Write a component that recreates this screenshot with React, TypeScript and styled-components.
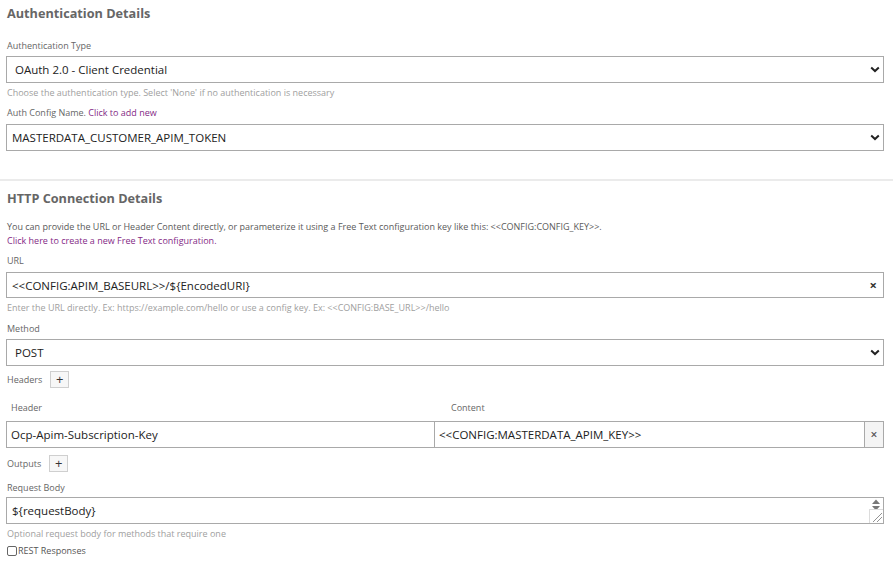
import React from "react";
import styled, { createGlobalStyle } from "styled-components";

const Global = createGlobalStyle`
  html, body { margin: 0; padding: 0; background: #fff; }
  body { font-family: "Open Sans", "Liberation Sans", Arial, sans-serif; color: #333; }
  * { box-sizing: border-box; }
`;

const Page = styled.div`
  padding: 0 9px 0 6px;
  width: 893px;
`;

const Section = styled.section<{ $divider?: boolean; $pt?: number; $pb?: number }>`
  display: flex;
  flex-direction: column;
  padding-top: ${(p) => p.$pt ?? 0}px;
  padding-bottom: ${(p) => p.$pb ?? 0}px;
  ${(p) => (p.$divider ? "border-top: 2px solid #ebebeb; margin: 0 -9px 0 -6px; padding-left: 6px; padding-right: 9px;" : "")}
`;

const Title = styled.h2`
  margin: 0;
  font-size: 12.7px;
  line-height: 26px;
  font-weight: 700;
  color: #666;
  padding-left: 1px;
`;

const Label = styled.div<{ $mt?: number }>`
  font-size: 9px;
  line-height: 14px;
  color: #666;
  margin-top: ${(p) => p.$mt ?? 0}px;
  padding-left: 1px;
  white-space: nowrap;
`;

const Help = styled.div<{ $mt?: number }>`
  font-size: 9px;
  line-height: 14px;
  color: #a0a0a0;
  margin-top: ${(p) => p.$mt ?? 0}px;
  padding-left: 1px;
  white-space: nowrap;
`;

const Info = styled.div<{ $mt?: number }>`
  font-size: 9px;
  line-height: 14px;
  color: #5a5a5a;
  margin-top: ${(p) => p.$mt ?? 0}px;
  padding-left: 1px;
  white-space: nowrap;
`;

const Link = styled.a`
  color: #842a86;
  text-decoration: none;
`;

const Box = styled.div<{ $mt?: number; $pl?: number; $pr?: number; $h?: number }>`
  position: relative;
  display: flex;
  align-items: center;
  height: ${(p) => p.$h ?? 27}px;
  margin-top: ${(p) => p.$mt ?? 0}px;
  border: 1px solid #a9a9a9;
  background: #fff;
  padding-left: ${(p) => p.$pl ?? 8}px;
  padding-right: ${(p) => p.$pr ?? 3}px;
  font-size: 11.5px;
  color: #222;
  white-space: nowrap;
`;

const BoxText = styled.span`
  flex: 1;
`;

const Chevron = () => (
  <svg width="10" height="7" viewBox="0 0 10 7">
    <path d="M1.2 1.6 L5 5.1 L8.8 1.6" fill="none" stroke="#222" strokeWidth="2" />
  </svg>
);

const Clear = styled.span`
  font-size: 13px;
  font-weight: 700;
  color: #333;
  line-height: 1;
`;

const InlineRow = styled.div<{ $mt?: number }>`
  display: flex;
  align-items: center;
  gap: 8px;
  margin-top: ${(p) => p.$mt ?? 0}px;
  height: 17px;
`;

const PlusButton = styled.button`
  width: 19px;
  height: 17px;
  border: 1px solid #cfcfcf;
  background: #f7f7f7;
  padding: 0;
  font-size: 13px;
  line-height: 13px;
  color: #333;
  display: flex;
  align-items: center;
  justify-content: center;
  font-family: inherit;
`;

const HeaderLabels = styled.div<{ $mt?: number }>`
  display: grid;
  grid-template-columns: 429px 1fr;
  margin-top: ${(p) => p.$mt ?? 0}px;
`;

const ColLabel = styled(Label)<{ $pl: number }>`
  padding-left: ${(p) => p.$pl}px;
`;

const HeaderRow = styled.div<{ $mt?: number }>`
  display: grid;
  grid-template-columns: 429px 430px 19px;
  height: 27px;
  margin-top: ${(p) => p.$mt ?? 0}px;
`;

const Cell = styled.div<{ $first?: boolean }>`
  display: flex;
  align-items: center;
  border: 1px solid #a9a9a9;
  ${(p) => (p.$first ? "" : "border-left: none;")}
  padding-left: 4px;
  font-size: 11.5px;
  color: #222;
  white-space: nowrap;
`;

const RemoveCell = styled.div`
  display: flex;
  align-items: center;
  justify-content: center;
  border: 1px solid #a9a9a9;
  border-left: none;
  background: #f4f4f4;
  font-size: 12px;
  font-weight: 600;
  color: #555;
`;

const TextArea = styled(Box)`
  padding-left: 5px;
`;

const Spinner = styled.div`
  position: absolute;
  right: 1px;
  top: 1px;
  width: 12px;
  display: flex;
  flex-direction: column;
  align-items: center;
`;

const Resize = styled.div`
  position: absolute;
  right: 0;
  bottom: 0;
  width: 14px;
  height: 14px;
  border-left: 1px solid #dcdcdc;
  border-top: 1px solid #dcdcdc;
  background: #fff;
`;

const CheckRow = styled.label<{ $mt?: number }>`
  display: flex;
  align-items: center;
  gap: 1px;
  margin-top: ${(p) => p.$mt ?? 0}px;
  font-size: 9px;
  line-height: 14px;
  color: #555;
  padding-left: 1px;
`;

const Check = styled.span`
  width: 10px;
  height: 10px;
  border: 1px solid #666;
  border-radius: 2px;
  background: #fff;
  display: inline-block;
`;

export default function App() {
  return (
    <>
      <Global />
      <Page>
        <Section $pb={28}>
          <Title>Authentication Details</Title>
          <Label $mt={13}>Authentication Type</Label>
          <Box $mt={3}>
            <BoxText>OAuth 2.0 - Client Credential</BoxText>
            <Chevron />
          </Box>
          <Help $mt={3}>Choose the authentication type. Select 'None' if no authentication is necessary</Help>
          <Label $mt={6}>
            Auth Config Name. <Link>Click to add new</Link>
          </Label>
          <Box $mt={4} $pl={5}>
            <BoxText>MASTERDATA_CUSTOMER_APIM_TOKEN</BoxText>
            <Chevron />
          </Box>
        </Section>
        <Section $divider $pt={4}>
          <Title>HTTP Connection Details</Title>
          <Info $mt={9}>
            You can provide the URL or Header Content directly, or parameterize it using a Free Text configuration key like this: &lt;&lt;CONFIG:CONFIG_KEY&gt;&gt;.
          </Info>
          <Info>
            <Link>Click here to create a new Free Text configuration.</Link>
          </Info>
          <Label $mt={6}>URL</Label>
          <Box $mt={4} $pl={5} $pr={6} $h={26}>
            <BoxText>&lt;&lt;CONFIG:APIM_BASEURL&gt;&gt;/${"{"}EncodedURI{"}"}</BoxText>
            <Clear>×</Clear>
          </Box>
          <Help $mt={3}>
            Enter the URL directly. Ex: https://example.com/hello or use a config key. Ex: &lt;&lt;CONFIG:BASE_URL&gt;&gt;/hello
          </Help>
          <Label $mt={7}>Method</Label>
          <Box $mt={3}>
            <BoxText>POST</BoxText>
            <Chevron />
          </Box>
          <InlineRow $mt={5}>
            <Label>Headers</Label>
            <PlusButton>+</PlusButton>
          </InlineRow>
          <HeaderLabels $mt={13}>
            <ColLabel $pl={5}>Header</ColLabel>
            <ColLabel $pl={16}>Content</ColLabel>
          </HeaderLabels>
          <HeaderRow $mt={6}>
            <Cell $first>Ocp-Apim-Subscription-Key</Cell>
            <Cell>&lt;&lt;CONFIG:MASTERDATA_APIM_KEY&gt;&gt;</Cell>
            <RemoveCell>×</RemoveCell>
          </HeaderRow>
          <InlineRow $mt={7}>
            <Label>Outputs</Label>
            <PlusButton>+</PlusButton>
          </InlineRow>
          <Label $mt={9}>Request Body</Label>
          <TextArea $mt={2}>
            <BoxText>${"{"}requestBody{"}"}</BoxText>
            <Spinner>
              <svg width="10" height="12" viewBox="0 0 10 12">
                <path d="M5 0.5 L9 5 L1 5 Z" fill="#777" />
                <path d="M5 11.5 L9 7 L1 7 Z" fill="#777" />
              </svg>
            </Spinner>
            <Resize>
              <svg width="13" height="13" viewBox="0 0 13 13">
                <path d="M3 12 L12 3 M7 12 L12 7" stroke="#777" strokeWidth="0.8" />
              </svg>
            </Resize>
          </TextArea>
          <Help $mt={3}>Optional request body for methods that require one</Help>
          <CheckRow $mt={3}>
            <Check />
            REST Responses
          </CheckRow>
        </Section>
      </Page>
    </>
  );
}
